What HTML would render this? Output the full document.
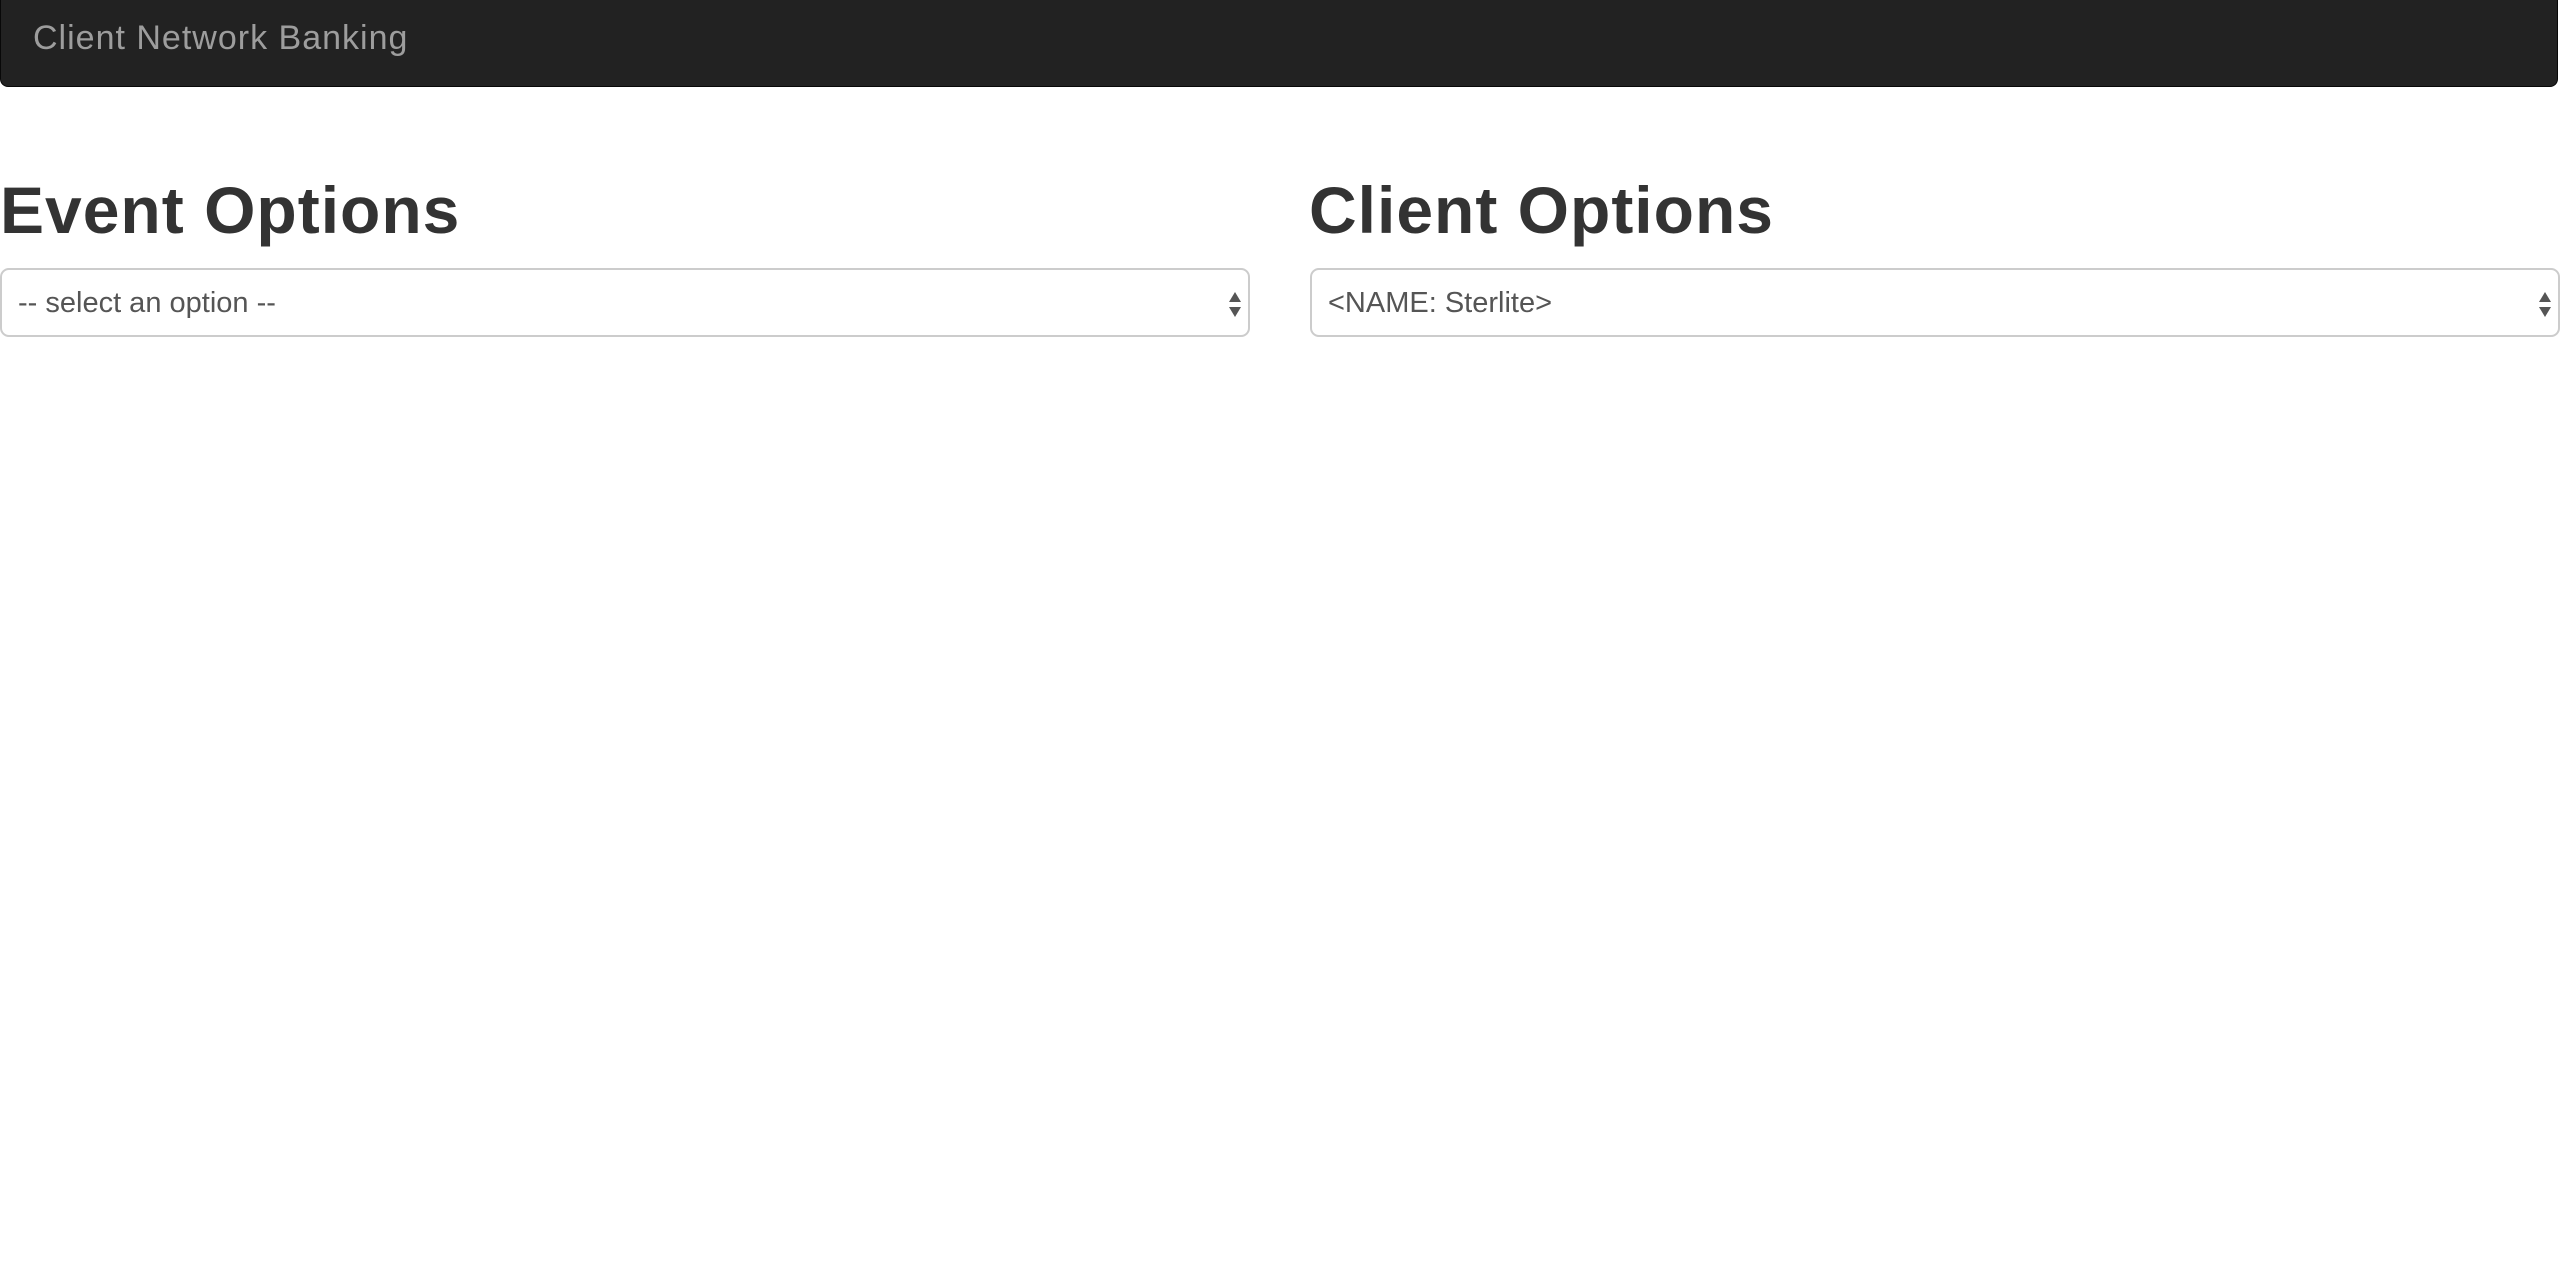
<!DOCTYPE html>
<html><head><meta charset="utf-8"><style>
html,body{margin:0;padding:0;background:#fff;width:2560px;height:1264px;overflow:hidden;font-family:"Liberation Sans",Arial,sans-serif;}
.nav{position:absolute;left:0;top:0;width:2556px;height:86px;background:#222;border:1px solid #080808;border-top:none;border-radius:0 0 8px 8px;}
.brand{position:absolute;left:32px;top:16px;font-size:34px;letter-spacing:1px;color:#9d9d9d;line-height:44px;}
h1{position:absolute;margin:0;font-size:66px;font-weight:bold;letter-spacing:1px;color:#333;line-height:1;top:177px;}
.sel{position:absolute;top:268px;height:65px;border:2px solid #ccc;border-radius:9px;box-sizing:content-box;background:#fff;}
.sel span{position:absolute;left:16px;top:15px;font-size:29px;line-height:36px;color:#555;}
.arr{position:absolute;top:22px;width:0;height:0;border-left:6px solid transparent;border-right:6px solid transparent;}
.up{border-bottom:10px solid #555;}
.dn{border-top:10px solid #555;top:37px;}
</style></head><body>
<div class="nav"><div class="brand">Client Network Banking</div></div>
<h1 style="left:0">Event Options</h1>
<h1 style="left:1309px">Client Options</h1>
<div class="sel" style="left:0;width:1246px"><span>-- select an option --</span><div class="arr up" style="left:1227px"></div><div class="arr dn" style="left:1227px"></div></div>
<div class="sel" style="left:1310px;width:1246px"><span>&lt;NAME: Sterlite&gt;</span><div class="arr up" style="left:1227px"></div><div class="arr dn" style="left:1227px"></div></div>
</body></html>
